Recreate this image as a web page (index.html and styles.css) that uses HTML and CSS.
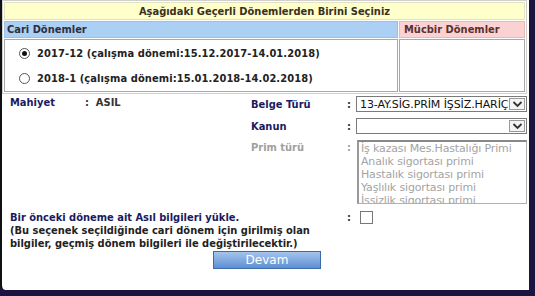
FILE: index.html
```html
<!DOCTYPE html>
<html>
<head>
<meta charset="utf-8">
<link rel="stylesheet" href="styles.css">
</head>
<body>
<div class="page">
  <table class="periods">
    <tr><td colspan="2" class="head">Aşağıdaki Geçerli Dönemlerden Birini Seçiniz</td></tr>
    <tr><td class="cari">Cari Dönemler</td><td class="mucbir">Mücbir Dönemler</td></tr>
    <tr>
      <td class="list">
        <label class="opt"><span class="radio on"></span>2017-12 (çalışma dönemi:15.12.2017-14.01.2018)</label>
        <label class="opt"><span class="radio"></span>2018-1 (çalışma dönemi:15.01.2018-14.02.2018)</label>
      </td>
      <td class="empty"></td>
    </tr>
  </table>

  <div class="form">
    <div class="mahiyet">
      <span class="lbl">Mahiyet</span>
      <span class="val">: &nbsp;ASIL</span>
    </div>
    <div class="fields">
      <span class="lbl fl">Belge Türü</span><span class="colon">:</span>
      <div class="select"><span class="sv">13-AY.SİG.PRİM İŞSİZ.HARİÇ</span><span class="arrow"><svg width="11" height="8" viewBox="0 0 11 8"><path d="M1.5 2 L5.5 6 L9.5 2" fill="none" stroke="#333" stroke-width="1.8"/></svg></span></div>

      <span class="lbl fl">Kanun</span><span class="colon">:</span>
      <div class="select"><span class="sv"></span><span class="arrow"><svg width="11" height="8" viewBox="0 0 11 8"><path d="M1.5 2 L5.5 6 L9.5 2" fill="none" stroke="#333" stroke-width="1.8"/></svg></span></div>

      <span class="lbl fl dis">Prim türü</span><span class="colon dis">:</span>
      <div class="listbox">
        <div>İş kazası Mes.Hastalığı Primi</div>
        <div>Analık sigortası primi</div>
        <div>Hastalık sigortası primi</div>
        <div>Yaşlılık sigortası primi</div>
        <div>İşsizlik sigortası primi</div>
      </div>
    </div>
  </div>

  <div class="load">
    <div class="load-text">
      <div class="lbl">Bir önceki döneme ait Asıl bilgileri yükle.</div>
      <div class="note">(Bu seçenek seçildiğinde cari dönem için girilmiş olan bilgiler, geçmiş dönem bilgileri ile değiştirilecektir.)</div>
    </div>
    <span class="colon">:</span>
    <span class="check"></span>
  </div>

  <div class="actions"><button class="btn">Devam</button></div>
</div>
</body>
</html>
```
FILE: styles.css
```css
html, body { margin: 0; padding: 0; }
body {
  width: 535px; height: 296px;
  background: #1b1340;
  font-family: "DejaVu Sans Condensed", "DejaVu Sans", Verdana, sans-serif;
  font-size: 11px;
  overflow: hidden;
}
.page {
  width: 527px; height: 290px;
  background: #fff;
  border-left: 2px solid #111;
  border-bottom-left-radius: 5px;
  box-sizing: content-box;
}
.periods {
  width: 525px;
  border-collapse: separate;
  border-spacing: 1px;
  border: 1px solid #cfcfcf;
  margin: 0;
}
.periods td { padding: 0; font-weight: bold; line-height: 13px; }
.head {
  height: 16px;
  background: #ffffcc;
  text-align: center;
  color: #3a3020;
  border: 1px solid #e2e2c0;
}
.cari {
  height: 15px;
  background: #abd0f3;
  color: #2e2e3e;
  padding-left: 2px !important;
  border: 1px solid #9cc0e4;
}
.mucbir {
  width: 120px;
  background: #fbd2d2;
  color: #5a3030;
  padding-left: 4px !important;
  border: 1px solid #e8b8b8;
}
.list {
  height: 51px;
  border: 1px solid #a8a8a8;
  color: #222;
  vertical-align: middle;
}
.empty { border: 1px solid #a8a8a8; }
.opt {
  display: flex;
  align-items: center;
  gap: 7px;
  height: 25px;
  padding-left: 14px;
  letter-spacing: 0.1px;
}
.radio {
  width: 11px; height: 11px;
  border: 1px solid #555;
  border-radius: 50%;
  background: #fff;
  position: relative;
  box-sizing: border-box;
}
.radio.on::after {
  content: "";
  position: absolute;
  left: 2px; top: 2px;
  width: 5px; height: 5px;
  border-radius: 50%;
  background: #111;
}
.lbl { font-weight: bold; color: #1a1a5e; }
.dis { color: #a0a0a0 !important; }
.form {
  display: flex;
  padding: 2px 0 0 8px;
}
.mahiyet {
  width: 241px;
  display: flex;
}
.mahiyet .lbl { width: 75px; }
.mahiyet .val { font-weight: bold; color: #333; }
.fields {
  display: grid;
  grid-template-columns: 96px 9px 171px;
  row-gap: 6px;
  align-items: center;
}
.colon { font-weight: bold; color: #333; }
.fields .dis { align-self: start; padding-top: 1px; }
.select {
  height: 16px;
  box-sizing: border-box;
  border: 1px solid #7a7a7a;
  display: flex;
  align-items: center;
  background: #fff;
}
.sv {
  flex: 1;
  overflow: hidden;
  white-space: nowrap;
  padding-left: 3px;
  color: #111;
  font-family: "DejaVu Sans", Verdana, sans-serif;
  letter-spacing: -0.1px;
}
.arrow {
  width: 16px; height: 12px;
  margin-right: 1px;
  border: 1px solid #999;
  box-sizing: border-box;
  display: flex; align-items: center; justify-content: center;
  background: #f4f4f4;
}
.listbox {
  height: 64px;
  box-sizing: border-box;
  border: 1px solid #b0b0b0;
  border-top: 2px solid #888;
  border-left: 2px solid #999;
  color: #a4a4a4;
  line-height: 13px;
  padding-left: 2px;
  overflow: hidden;
  margin-left: 1px;
  font-family: "DejaVu Sans", Verdana, sans-serif;
  letter-spacing: -0.15px;
}
.load {
  display: flex;
  align-items: flex-start;
  padding: 7px 0 0 8px;
}
.load-text { width: 337px; line-height: 13px; font-weight: bold; }
.note { color: #222; }
.load .colon { width: 13px; padding-top: 0; }
.check {
  width: 13px; height: 13px;
  border: 1px solid #777;
  box-sizing: border-box;
  margin-top: 0;
}
.actions { padding: 1px 0 0 211px; }
.btn {
  width: 108px; height: 18px;
  border: 1px solid #3d6aa8;
  background: linear-gradient(#a6c4ec, #5d8fd4);
  color: #fff;
  font-family: "DejaVu Sans", Verdana, sans-serif;
  font-size: 12px;
  padding: 0;
  display: block;
}
```
